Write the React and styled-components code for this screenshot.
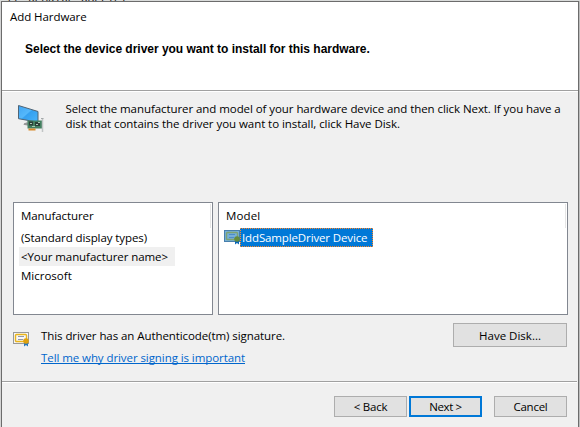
import React from 'react';
import styled, { createGlobalStyle } from 'styled-components';

const GlobalStyle = createGlobalStyle`
  *, *::before, *::after { box-sizing: border-box; }
  body { margin: 0; background: #d9dbda; overflow: hidden; }
`;

const Screen = styled.div`
  width: 580px;
  height: 427px;
  display: flex;
  flex-direction: column;
  overflow: hidden;
  background: linear-gradient(90deg, #d4d4d4 50%, #bdbdbd 50%);
  color: #000;
  font: 11.5px/15px "Open Sans", "Noto Sans", sans-serif;
  white-space: pre;
`;

const Backdrop = styled.div`
  flex: none;
  height: 1px;
  display: flex;
  align-items: flex-end;
  gap: 9px;
  padding-left: 6px;
  overflow: hidden;
  background: #d9dbda;
  color: #222;
  font: 11px/4px "Liberation Mono", monospace;
`;

const Dialog = styled.section`
  flex: 1;
  display: flex;
  flex-direction: column;
  margin: 0 1px;
  border: 1px solid #6c6c6c;
  border-bottom: 0;
  background: #f0f0f0;
`;

const Label = styled.span`
  letter-spacing: ${({ $track = 0 }) => $track}px;
`;

const Header = styled.header`
  flex: none;
  height: 88px;
  display: flex;
  flex-direction: column;
  gap: 17px;
  padding: 7px 8px 0;
  background: #fff;
`;

const Heading = styled.h1`
  margin: 1px 0 0 15px;
  font: bold 12px/15px "Liberation Sans", Arial, sans-serif;
  letter-spacing: -0.02px;
`;

const Divider = styled.div`
  flex: none;
  height: 2px;
  margin-right: ${({ $inset = 0 }) => $inset}px;
  border-top: 1px solid #a0a0a0;
  background: #fff;
`;

const Body = styled.main`
  flex: none;
  height: 289px;
  display: flex;
  flex-direction: column;
  padding: 9px 11px 0 11px;
`;

const Intro = styled.div`
  height: 101px;
  display: flex;
  gap: 21.5px;
  padding-left: 4px;

  svg { flex: none; margin-top: 3px; }
`;

const IntroText = styled.div`
  display: flex;
  flex-direction: column;
`;

const Lists = styled.div`
  height: 113px;
  display: grid;
  grid-template-columns: 200px 350px;
  gap: 5px;
`;

const ListBox = styled.div`
  display: flex;
  flex-direction: column;
  align-items: flex-start;
  padding: 1px 1px 0 5px;
  border: 1px solid #828790;
  background: #fff;
`;

const ColumnHead = styled.div`
  width: 100%;
  height: 24px;
  padding: 4px 0 0 2px;
  border-right: 1px solid #e5e5e5;
`;

const ListRow = styled.div`
  height: 19px;
  display: flex;
  align-items: center;
  padding: 0 7px 0 2px;
  background: ${({ $marked }) => ($marked ? '#f0f0f0' : 'transparent')};
`;

const DeviceRow = styled.div`
  height: 19px;
  display: flex;
  align-items: center;
`;

const SelectedItem = styled.div`
  width: 133px;
  height: 19px;
  margin-left: -1px;
  padding: 1px 0 0 1px;
  border: 1px dotted #ff8728;
  background: #0078d7;
  color: #fff;
`;

const Signature = styled.div`
  display: grid;
  grid-template-columns: 28px 1fr 114px;
  align-items: start;
  padding-top: 8px;

  > svg { margin-top: 9px; }
`;

const SignatureText = styled.div`
  display: flex;
  flex-direction: column;
  align-items: flex-start;
  gap: 7px;
  padding-top: 5px;
`;

const Link = styled.a`
  color: #0066cc;
  border-bottom: 1px solid #0066cc;
  line-height: 15px;
  height: 14px;
`;

const Button = styled.button`
  width: ${({ $width }) => $width}px;
  height: ${({ $height = 21 }) => $height}px;
  display: flex;
  align-items: center;
  justify-content: center;
  padding: 0;
  border: ${({ $primary }) => ($primary ? '2px solid #0078d7' : '1px solid #adadad')};
  border-radius: 0;
  background: #e1e1e1;
  color: #000;
  font: inherit;
`;

const Footer = styled.footer`
  display: flex;
  justify-content: flex-end;
  padding: 13px 11px 0 0;
`;

const ButtonPair = styled.div`
  display: flex;
  gap: 2px;
  margin-right: 12px;
`;

const DisplayAdapterIcon = () => (
  <svg width="27" height="28" viewBox="0 0 27 28">
    <defs>
      <linearGradient id="screen" x1="0" y1="0" x2="1" y2="1">
        <stop offset="0" stopColor="#3fa4f3" />
        <stop offset=".45" stopColor="#55b8fb" />
        <stop offset=".5" stopColor="#35a0ef" />
        <stop offset="1" stopColor="#49b4fb" />
      </linearGradient>
    </defs>
    <path d="M1.5 1.5 21 7.5v10.7L1.5 14.7z" fill="url(#screen)" stroke="#4f6475" strokeWidth="1" />
    <path d="M6 20.5l5-3.5v5z" fill="#b5b9bb" />
    <path d="M7 20h5" stroke="#777" />
    <path d="M10.5 16.5H25v8H10.5z" fill="#448060" />
    <path d="M12 17.5h4v4h-4zM18 18h5v4h-5z" fill="#2b4038" />
    <path d="M13 19.5h2M19 20.5h2M21 18.5h2M15 22.5h3" stroke="#a9c9b3" />
    <path d="M11.5 24.5h7v2h-7z" fill="#d98a2b" />
    <path d="M25.5 14v14" stroke="#c1c4c5" strokeWidth="1.5" />
    <path d="M24 14.5h2.5" stroke="#a5a9aa" />
  </svg>
);

const CertificateIcon = ({ selected = false }) => {
  const paper = selected ? '#76afd9' : '#f7f7f7';
  const edge = selected ? '#477fad' : '#999';
  const band = selected ? '#7da374' : '#eab51c';
  const line = selected ? '#4c8dca' : '#9499a8';
  const seal = selected ? '#668c3c' : '#dfa00c';
  const ribbon = selected ? '#0866b8' : '#2777bd';
  return (
    <svg width="17" height="15" viewBox="0 0 17 15">
      <rect x=".5" y=".5" width="15" height="11" fill={paper} stroke={edge} />
      <rect x="2.5" y="2.5" width="11" height="7" rx="1" fill="none" stroke={band} strokeWidth="1.4" />
      <path d="M5 4.5h6M5 7.5h5" stroke={line} />
      <path d="M11 10h4v4.5l-2-1.5-2 1.5z" fill={ribbon} />
      <circle cx="13" cy="9" r="2.8" fill={seal} />
    </svg>
  );
};

export default function App() {
  return (
    <Screen>
      <GlobalStyle />
      <Backdrop><span>II</span><span>DESKTOP-UBFLTET</span></Backdrop>
      <Dialog>
        <Header>
          <Label $track={-0.07}>Add Hardware</Label>
          <Heading>Select the device driver you want to install for this hardware.</Heading>
        </Header>
        <Divider />
        <Body>
          <Intro>
            <DisplayAdapterIcon />
            <IntroText>
              <Label $track={-0.07}>Select the manufacturer and model of your hardware device and then click Next. If you have a</Label>
              <Label $track={-0.055}>disk that contains the driver you want to install, click Have Disk.</Label>
            </IntroText>
          </Intro>
          <Lists>
            <ListBox>
              <ColumnHead><Label $track={-0.09}>Manufacturer</Label></ColumnHead>
              <ListRow><Label $track={-0.09}>(Standard display types)</Label></ListRow>
              <ListRow $marked><Label $track={-0.07}>&lt;Your manufacturer name&gt;</Label></ListRow>
              <ListRow><Label>Microsoft</Label></ListRow>
            </ListBox>
            <ListBox>
              <ColumnHead><Label $track={0.15}>Model</Label></ColumnHead>
              <DeviceRow>
                <CertificateIcon selected />
                <SelectedItem><Label $track={-0.13}>IddSampleDriver Device</Label></SelectedItem>
              </DeviceRow>
            </ListBox>
          </Lists>
          <Signature>
            <CertificateIcon />
            <SignatureText>
              <Label $track={-0.075}>This driver has an Authenticode(tm) signature.</Label>
              <Link><Label $track={-0.077}>Tell me why driver signing is important</Label></Link>
            </SignatureText>
            <Button $width={114} $height={24}><Label>Have Disk...</Label></Button>
          </Signature>
        </Body>
        <Divider $inset={1} />
        <Footer>
          <ButtonPair>
            <Button $width={73}><Label $track={-0.2}>&lt; Back</Label></Button>
            <Button $width={73} $primary><Label $track={-0.4}>Next &gt;</Label></Button>
          </ButtonPair>
          <Button $width={73}><Label $track={-0.25}>Cancel</Label></Button>
        </Footer>
      </Dialog>
    </Screen>
  );
}
